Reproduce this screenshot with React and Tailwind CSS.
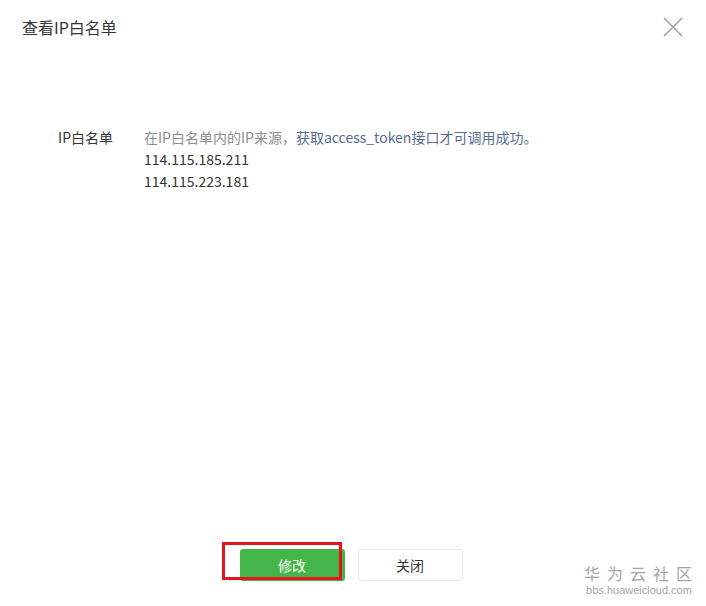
export default function App() {
  const font = { fontFamily: '"Noto Sans CJK SC", "Noto Sans", sans-serif' };
  return (
    <div className="relative w-[706px] h-[606px] bg-white flex flex-col" style={font}>
      <div className="flex items-center justify-between pl-[22px] pr-[22px] h-[54px]">
        <span className="text-[16px] leading-[20px] text-[#353535]">查看IP白名单</span>
        <svg width="20" height="20" viewBox="0 0 20 20" className="text-[#9a9a9a] mr-[1px]">
          <path d="M1 1L19 19M19 1L1 19" stroke="currentColor" strokeWidth="1.4" fill="none" />
        </svg>
      </div>
      <div className="flex pt-[72px] text-[14px] leading-[22px]">
        <div className="w-[113px] pr-0 text-right text-[#333]">IP白名单</div>
        <div className="pl-[31px] flex flex-col">
          <div className="text-[#8d8d8d]">
            在IP白名单内的IP来源，<span className="text-[#576b95]">获取access_token接口才可调用成功。</span>
          </div>
          <div className="text-[#333]">114.115.185.211</div>
          <div className="text-[#333]">114.115.223.181</div>
        </div>
      </div>
      <div className="flex-1" />
      <div className="flex justify-center gap-[13px] pb-[25px] pr-[4px]">
        <div className="relative">
          <button className="w-[105px] h-[32px] rounded-[3px] bg-[#44b549] text-white text-[14px]">修改</button>
          <div className="absolute left-[-18px] top-[-7px] w-[120px] h-[38px] border-[3px] border-[#e8141b]" />
        </div>
        <button className="w-[105px] h-[32px] rounded-[3px] border border-[#e4e8eb] bg-white text-[#353535] text-[14px]">关闭</button>
      </div>
      <div className="absolute left-[579px] top-[563px] flex flex-col items-center text-[#a5a5a5]">
        <span className="text-[16px] leading-[20px] tracking-[7px] pl-[5px]">华为云社区</span>
        <span className="text-[11px] leading-[12px] mt-[1px]" style={{ fontFamily: '"Liberation Sans", sans-serif' }}>bbs.huaweicloud.com</span>
      </div>
    </div>
  );
}
